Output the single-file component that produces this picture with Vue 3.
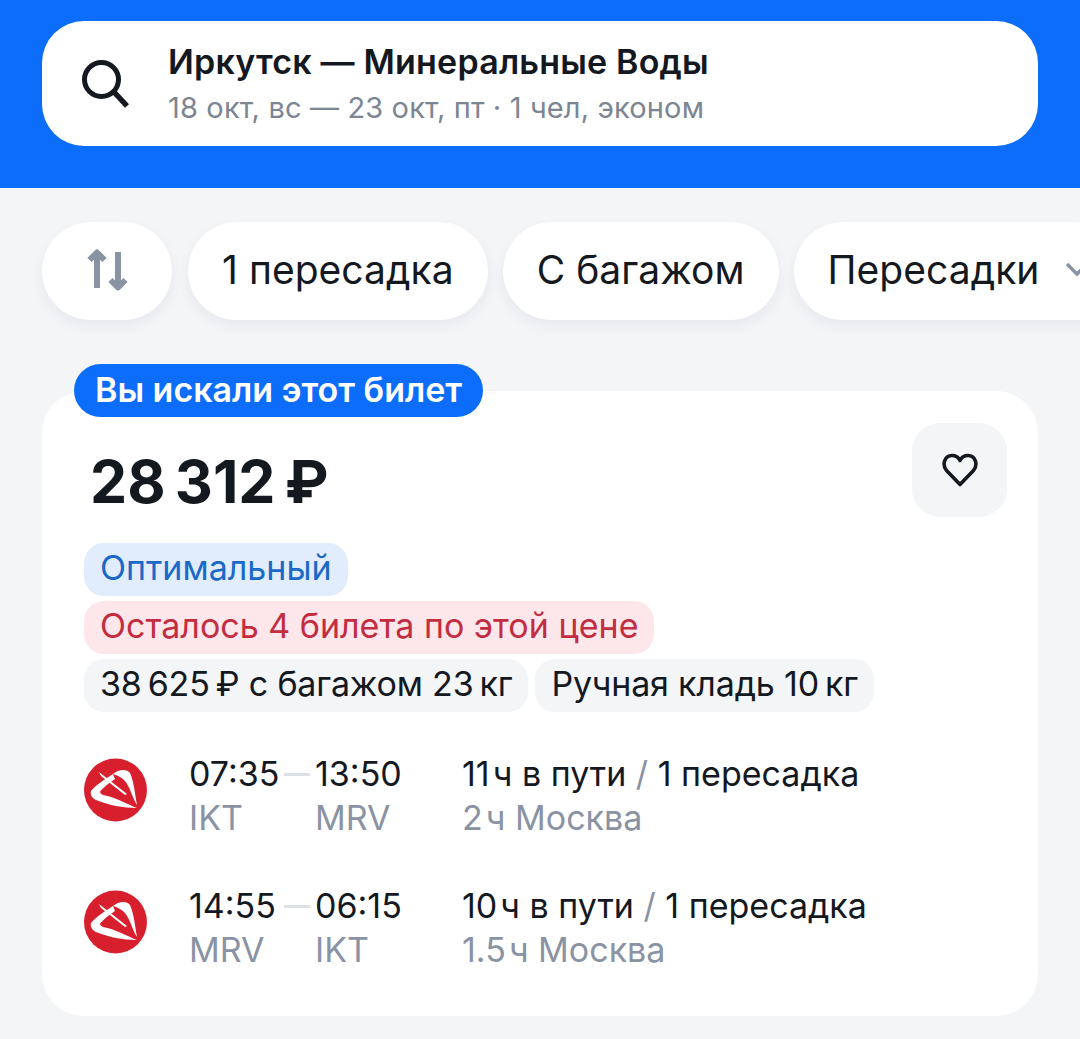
<template>
  <div class="page">
    <header class="top">
      <div class="search">
        <svg class="search-icon" width="50" height="50" viewBox="0 0 50 50" fill="none">
          <circle cx="19.500" cy="20.500" r="17" stroke="#14181f" stroke-width="5" />
          <path d="M32 33 L45 47" stroke="#14181f" stroke-width="5.500" />
        </svg>
        <div class="search-text">
          <div class="route">Иркутск — Минеральные Воды</div>
          <div class="dates">18 окт, вс — 23 окт, пт · 1 чел, эконом</div>
        </div>
      </div>
    </header>

    <div class="chips">
      <div class="chip chip-sort">
        <svg width="44" height="44" viewBox="0 0 44 44" fill="none" stroke="#8a93a3" stroke-width="6" stroke-linejoin="round">
          <path d="M12 39 V4" />
          <path d="M4.500 11 L12 3.500 L19.500 11" />
          <path d="M33 3 V38" />
          <path d="M25.500 31 L33 38.500 L40.500 31" />
        </svg>
      </div>
      <div v-for="c in chips" :key="c" class="chip">{{ c }}</div>
      <div class="chip chip-more">
        Пересадки
        <svg width="26" height="16" viewBox="0 0 26 16" fill="none" stroke="#8a93a3" stroke-width="3.500">
          <path d="M3 3 L13 13 L23 3" />
        </svg>
      </div>
    </div>

    <section class="card">
      <div class="badge">Вы искали этот билет</div>
      <div class="card-head">
        <div class="price">28&thinsp;312&thinsp;₽</div>
        <button class="fav">
          <svg width="36" height="34" viewBox="0 0 36 34" fill="none" stroke="#14181f" stroke-width="3.600" stroke-linejoin="round">
            <path d="M18 31.500 L4.500 17.500 C-0.500 11 3 2.500 10 2.500 C13.500 2.500 16.500 4.500 18 7.500 C19.500 4.500 22.500 2.500 26 2.500 C33 2.500 36.500 11 31.500 17.500 Z" />
          </svg>
        </button>
      </div>

      <div class="tags">
        <div class="tag-row"><span class="tag tag-blue">Оптимальный</span></div>
        <div class="tag-row"><span class="tag tag-red">Осталось 4 билета по этой цене</span></div>
        <div class="tag-row">
          <span class="tag tag-grey">38&thinsp;625&thinsp;₽ с багажом 23&thinsp;кг</span>
          <span class="tag tag-grey">Ручная кладь 10&thinsp;кг</span>
        </div>
      </div>

      <div class="flights">
        <div v-for="f in flights" :key="f.from + f.dep" class="flight">
          <svg class="logo" width="64" height="64" viewBox="0 0 64 64">
            <circle cx="31.500" cy="32" r="31.500" fill="#d81f2d" />
            <!-- left band and lower sweep -->
            <path d="M29 16 C21 21 12 27 7 33 C6 37 8 40 12 42 C24 47 39 50 53 50 C43 46 31 39 19 37 C17 36 16 35 16 33.500 C20 29 25 25 31 21 Z" fill="#fff" />
            <!-- upper right crescent -->
            <path d="M29 16 C35 11 43 11 46 15 C50 24 51 36 53 47 C48 39 46 29 41 23 C37 19 33 17 29 16 Z" fill="#fff" />
            <!-- thin crossing line -->
            <path d="M15 14 L43 36 L41 37 L17 18 Z" fill="#fff" />
          </svg>
          <div class="times">
            <div class="col">
              <div class="time">{{ f.dep }}</div>
              <div class="code">{{ f.from }}</div>
            </div>
            <span class="dash"></span>
            <div class="col">
              <div class="time">{{ f.arr }}</div>
              <div class="code">{{ f.to }}</div>
            </div>
          </div>
          <div class="col">
            <div class="time">{{ f.dur }} в пути <span class="slash">/</span> 1 пересадка</div>
            <div class="code">{{ f.stop }}</div>
          </div>
        </div>
      </div>
    </section>
  </div>
</template>

<script setup>
const chips = ['1 пересадка', 'С багажом']

const flights = [
  { dep: '07:35', arr: '13:50', from: 'IKT', to: 'MRV', dur: '11\u200Aч', stop: '2\u200Aч Москва' },
  { dep: '14:55', arr: '06:15', from: 'MRV', to: 'IKT', dur: '10\u200Aч', stop: '1.5\u200Aч Москва' },
]
</script>

<style>
html, body {
  margin: 0;
  background: #f3f5f7;
  overflow: hidden;
}
</style>

<style scoped>
.page {
  width: 1080px;
  height: 1039px;
  overflow: hidden;
  background: #f3f5f7;
  font-family: Inter, "Liberation Sans", sans-serif;
  color: #14181f;
}

.top {
  height: 188px;
  box-sizing: border-box;
  padding: 21px 42px 0;
  background: #0c6dfb;
}

.search {
  height: 125px;
  display: flex;
  align-items: center;
  gap: 36px;
  padding-left: 40px;
  background: #fff;
  border-radius: 42px;
}

.search-icon {
  flex: none;
  margin-top: 1px;
}

.route {
  font-size: 34px;
  font-weight: 600;
  line-height: 40px;
  letter-spacing: 0.2px;
}

.dates {
  margin-top: 9px;
  font-size: 29px;
  line-height: 34px;
  letter-spacing: 0.15px;
  color: #7c8592;
}

.chips {
  display: flex;
  gap: 15px;
  padding: 34px 0 0 42px;
  white-space: nowrap;
}

.chip {
  flex: none;
  height: 98px;
  box-sizing: border-box;
  display: flex;
  align-items: center;
  gap: 25px;
  padding: 0 34px 4px;
  background: #fff;
  border-radius: 49px;
  font-size: 39px;
  letter-spacing: 0.04px;
  box-shadow: 0 6px 14px rgba(30, 40, 60, 0.06);
}

.chip-sort {
  width: 130px;
  margin-right: 1px;
  justify-content: center;
  padding: 0;
}

.card {
  position: relative;
  height: 625px;
  box-sizing: border-box;
  margin: 71px 42px 0;
  padding: 32px 31px 0 42px;
  background: #fff;
  border-radius: 42px;
}

.badge {
  position: absolute;
  left: 32px;
  top: -27px;
  height: 53px;
  line-height: 52px;
  padding: 0 21px;
  border-radius: 27px;
  background: #0c6dfb;
  color: #fff;
  font-size: 34px;
  font-weight: 600;
}

.card-head {
  display: flex;
  justify-content: space-between;
  align-items: flex-start;
}

.price {
  margin: 27px 0 0 6px;
  font-size: 59px;
  font-weight: 700;
  line-height: 64px;
}

.fav {
  width: 95px;
  height: 94px;
  display: flex;
  align-items: center;
  justify-content: center;
  padding: 0;
  border: 0;
  border-radius: 28px;
  background: #f3f5f7;
}

.tags {
  display: flex;
  flex-direction: column;
  gap: 5px;
  margin-top: 26px;
}

.tag-row {
  display: flex;
  gap: 7px;
}

.tag {
  height: 53px;
  line-height: 50px;
  padding: 0 16px;
  border-radius: 20px;
  font-size: 34px;
  white-space: nowrap;
}

.tag-blue {
  background: #e1edfd;
  color: #1a68c8;
}

.tag-red {
  background: #fde7ea;
  color: #c22d42;
}

.tag-grey {
  background: #f3f5f7;
  color: #14181f;
  letter-spacing: -0.17px;
}

.flights {
  display: flex;
  flex-direction: column;
  gap: 44px;
  margin-top: 40px;
}

.flight {
  display: flex;
  align-items: flex-start;
  height: 88px;
}

.logo {
  flex: none;
  margin: 6px 41px 0 0;
}

.times {
  width: 273px;
  flex: none;
  display: flex;
  align-items: flex-start;
}

.col {
  width: 90px;
  white-space: nowrap;
}

.dash {
  width: 26px;
  height: 3px;
  margin: 21px 5px 0 5px;
  background: #dde0e5;
}

.time {
  font-size: 34px;
  line-height: 43px;
}

.code {
  font-size: 34px;
  line-height: 45px;
  color: #8a93a3;
}

.slash {
  color: #8a93a3;
}
</style>
